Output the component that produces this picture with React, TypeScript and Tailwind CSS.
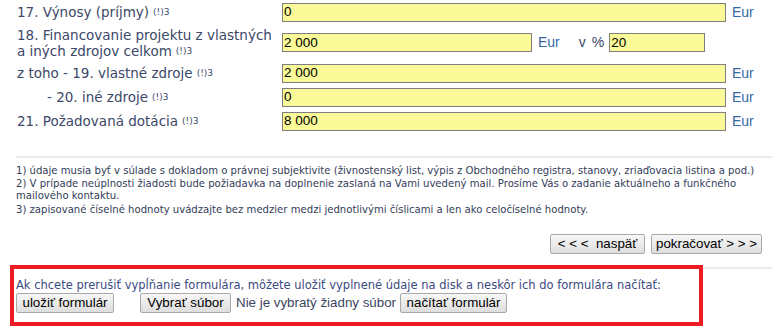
import React from "react";

const labelColor = "text-[#3b4868]";

function Sup() {
  return <sup className="text-[9px] ml-[4px] relative -top-[2px]">(!)3</sup>;
}

function Field({ value, w }: { value: string; w: string }) {
  return (
    <div
      className={`${w} shrink-0 h-[19px] bg-[#fafa98] border border-[#7e7e7e] pl-[1px] flex items-center text-[13.5px] text-black font-['Liberation_Sans',Arial,sans-serif] leading-none`}
    >
      {value}
    </div>
  );
}

function Eur({ className = "" }: { className?: string }) {
  return (
    <span className={`text-[14px] text-[#3567a3] font-['Liberation_Sans',Arial,sans-serif] ${className}`}>Eur</span>
  );
}

function Btn({ children, className = "" }: { children: React.ReactNode; className?: string }) {
  return (
    <div
      className={`h-[20px] shrink-0 whitespace-nowrap px-[6px] flex items-center justify-center border border-[#a9a9a9] rounded-[2px] bg-gradient-to-b from-[#f7f7f7] to-[#dedede] text-[13.33px] text-black font-['Liberation_Sans',Arial,sans-serif] leading-none ${className}`}
    >
      {children}
    </div>
  );
}

export default function App() {
  return (
    <div className={`w-[772px] h-[329px] bg-white overflow-hidden font-['DejaVu_Sans',Verdana,sans-serif] ${labelColor}`}>
      {/* rows */}
      <div className="flex items-center h-[24px]">
        <div className="w-[282px] shrink-0 pl-[17px] text-[13.5px] whitespace-nowrap">
          17. Výnosy (príjmy)<Sup />
        </div>
        <Field value="0" w="w-[444px]" />
        <Eur className="ml-[6px]" />
      </div>
      <div className="flex items-center h-[37px]">
        <div className="w-[282px] shrink-0 pl-[17px] text-[13.5px] leading-[16px] whitespace-nowrap">
          18. Financovanie projektu z vlastných
          <br />a iných zdrojov celkom<Sup />
        </div>
        <Field value="2 000" w="w-[250px]" />
        <Eur className="ml-[6px]" />
        <span className="ml-[19px] text-[14px] font-['Liberation_Sans',Arial,sans-serif]">v</span>
        <span className="ml-[6px] mr-[5px] text-[14px] font-['Liberation_Sans',Arial,sans-serif]">%</span>
        <Field value="20" w="w-[96px]" />
      </div>
      <div className="flex items-center h-[24px]">
        <div className="w-[282px] shrink-0 pl-[17px] text-[13.5px] whitespace-nowrap">
          z toho - 19. vlastné zdroje<Sup />
        </div>
        <Field value="2 000" w="w-[444px]" />
        <Eur className="ml-[6px]" />
      </div>
      <div className="flex items-center h-[24px]">
        <div className="w-[282px] shrink-0 pl-[47px] text-[13.5px] whitespace-nowrap">
          - 20. iné zdroje<Sup />
        </div>
        <Field value="0" w="w-[444px]" />
        <Eur className="ml-[6px]" />
      </div>
      <div className="flex items-center h-[24px]">
        <div className="w-[282px] shrink-0 pl-[17px] text-[13.5px] whitespace-nowrap">
          21. Požadovaná dotácia<Sup />
        </div>
        <Field value="8 000" w="w-[444px]" />
        <Eur className="ml-[6px]" />
      </div>

      {/* separator */}
      <div className="ml-[16px] mt-[23px] h-[2px] bg-[#ebebeb]" />

      {/* footnotes */}
      <div className="pl-[16px] pt-[7px] text-[10.1px] leading-[12.5px] text-[#333c58]">
        <div>
          1) údaje musia byť v súlade s dokladom o právnej subjektivite (živnostenský list, výpis z Obchodného registra, stanovy, zriaďovacia listina a pod.)
        </div>
        <div>
          2) V prípade neúplnosti žiadosti bude požiadavka na doplnenie zaslaná na Vami uvedený mail. Prosíme Vás o zadanie aktuálneho a funkčného
          <br />
          mailového kontaktu.
        </div>
        <div className="mt-[1px]">3) zapisované číselné hodnoty uvádzajte bez medzier medzi jednotlivými číslicami a len ako celočíselné hodnoty.</div>
      </div>

      {/* nav buttons */}
      <div className="flex justify-end gap-[6px] pr-[10px] mt-[18px]">
        <Btn className="w-[95px]">&lt; &lt; &lt;&nbsp; naspäť</Btn>
        <Btn className="w-[111px]">pokračovať &gt; &gt; &gt;</Btn>
      </div>

      {/* save/load box */}
      <div className="flex mt-[11px]">
        <div className="ml-[10px] w-[693px] shrink-0 h-[61px] border-[4px] border-[#ed1c24] pl-[2px] pt-[10px]">
          <div className="text-[11.5px] leading-[13px] whitespace-nowrap text-[#3b4a80]">
            Ak chcete prerušiť vypĺňanie formulára, môžete uložiť vyplnené údaje na disk a neskôr ich do formulára načítať:
          </div>
          <div className="flex items-center mt-[1px]">
            <Btn className="w-[98px]">uložiť formulár</Btn>
            <Btn className="ml-[26px] w-[91px]">Vybrať súbor</Btn>
            <span className="ml-[5px] text-[13.33px] whitespace-nowrap text-[#3b4560] font-['Liberation_Sans',Arial,sans-serif]">Nie je vybratý žiadny súbor</span>
            <Btn className="ml-[4px] w-[107px]">načítať formulár</Btn>
          </div>
        </div>
        <div className="flex-1 mt-[2px] h-[2px] bg-[#ebebeb]" />
      </div>
    </div>
  );
}
